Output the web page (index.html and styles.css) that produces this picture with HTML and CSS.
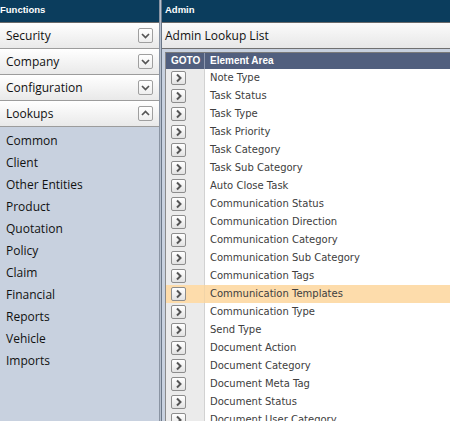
FILE: index.html
```html
<!DOCTYPE html>
<html>
<head>
<meta charset="utf-8">
<link rel="stylesheet" href="styles.css">
</head>
<body>
<div class="app">
  <aside class="side">
    <div class="bar">Functions</div>
    <div class="acc-h"><span>Security</span><span class="tog"><svg width="13" height="13" viewBox="0 0 13 13"><polyline points="3,5 6.5,8.5 10,5" fill="none" stroke="#555" stroke-width="1.7"/></svg></span></div>
    <div class="acc-h"><span>Company</span><span class="tog"><svg width="13" height="13" viewBox="0 0 13 13"><polyline points="3,5 6.5,8.5 10,5" fill="none" stroke="#555" stroke-width="1.7"/></svg></span></div>
    <div class="acc-h"><span>Configuration</span><span class="tog"><svg width="13" height="13" viewBox="0 0 13 13"><polyline points="3,5 6.5,8.5 10,5" fill="none" stroke="#555" stroke-width="1.7"/></svg></span></div>
    <div class="acc-h"><span>Lookups</span><span class="tog"><svg width="13" height="13" viewBox="0 0 13 13"><polyline points="3,8 6.5,4.5 10,8" fill="none" stroke="#555" stroke-width="1.7"/></svg></span></div>
    <ul class="sub">
      <li>Common</li>
      <li>Client</li>
      <li>Other Entities</li>
      <li>Product</li>
      <li>Quotation</li>
      <li>Policy</li>
      <li>Claim</li>
      <li>Financial</li>
      <li>Reports</li>
      <li>Vehicle</li>
      <li>Imports</li>
    </ul>
  </aside>
  <div class="split"></div>
  <main class="main">
    <div class="bar">Admin</div>
    <div class="title">Admin Lookup List</div>
    <div class="content">
      <div class="grid">
        <div class="row head"><div class="c-goto">GOTO</div><div class="c-name">Element Area</div></div>
        <div class="row"><div class="c-goto"><span class="go"><svg width="13" height="12" viewBox="0 0 13 12"><polyline points="5,2.5 8.5,6 5,9.5" fill="none" stroke="#555" stroke-width="2"/></svg></span></div><div class="c-name">Note Type</div></div>
        <div class="row"><div class="c-goto"><span class="go"><svg width="13" height="12" viewBox="0 0 13 12"><polyline points="5,2.5 8.5,6 5,9.5" fill="none" stroke="#555" stroke-width="2"/></svg></span></div><div class="c-name">Task Status</div></div>
        <div class="row"><div class="c-goto"><span class="go"><svg width="13" height="12" viewBox="0 0 13 12"><polyline points="5,2.5 8.5,6 5,9.5" fill="none" stroke="#555" stroke-width="2"/></svg></span></div><div class="c-name">Task Type</div></div>
        <div class="row"><div class="c-goto"><span class="go"><svg width="13" height="12" viewBox="0 0 13 12"><polyline points="5,2.5 8.5,6 5,9.5" fill="none" stroke="#555" stroke-width="2"/></svg></span></div><div class="c-name">Task Priority</div></div>
        <div class="row"><div class="c-goto"><span class="go"><svg width="13" height="12" viewBox="0 0 13 12"><polyline points="5,2.5 8.5,6 5,9.5" fill="none" stroke="#555" stroke-width="2"/></svg></span></div><div class="c-name">Task Category</div></div>
        <div class="row"><div class="c-goto"><span class="go"><svg width="13" height="12" viewBox="0 0 13 12"><polyline points="5,2.5 8.5,6 5,9.5" fill="none" stroke="#555" stroke-width="2"/></svg></span></div><div class="c-name">Task Sub Category</div></div>
        <div class="row"><div class="c-goto"><span class="go"><svg width="13" height="12" viewBox="0 0 13 12"><polyline points="5,2.5 8.5,6 5,9.5" fill="none" stroke="#555" stroke-width="2"/></svg></span></div><div class="c-name">Auto Close Task</div></div>
        <div class="row"><div class="c-goto"><span class="go"><svg width="13" height="12" viewBox="0 0 13 12"><polyline points="5,2.5 8.5,6 5,9.5" fill="none" stroke="#555" stroke-width="2"/></svg></span></div><div class="c-name">Communication Status</div></div>
        <div class="row"><div class="c-goto"><span class="go"><svg width="13" height="12" viewBox="0 0 13 12"><polyline points="5,2.5 8.5,6 5,9.5" fill="none" stroke="#555" stroke-width="2"/></svg></span></div><div class="c-name">Communication Direction</div></div>
        <div class="row"><div class="c-goto"><span class="go"><svg width="13" height="12" viewBox="0 0 13 12"><polyline points="5,2.5 8.5,6 5,9.5" fill="none" stroke="#555" stroke-width="2"/></svg></span></div><div class="c-name">Communication Category</div></div>
        <div class="row"><div class="c-goto"><span class="go"><svg width="13" height="12" viewBox="0 0 13 12"><polyline points="5,2.5 8.5,6 5,9.5" fill="none" stroke="#555" stroke-width="2"/></svg></span></div><div class="c-name">Communication Sub Category</div></div>
        <div class="row"><div class="c-goto"><span class="go"><svg width="13" height="12" viewBox="0 0 13 12"><polyline points="5,2.5 8.5,6 5,9.5" fill="none" stroke="#555" stroke-width="2"/></svg></span></div><div class="c-name">Communication Tags</div></div>
        <div class="row sel"><div class="c-goto"><span class="go"><svg width="13" height="12" viewBox="0 0 13 12"><polyline points="5,2.5 8.5,6 5,9.5" fill="none" stroke="#555" stroke-width="2"/></svg></span></div><div class="c-name">Communication Templates</div></div>
        <div class="row"><div class="c-goto"><span class="go"><svg width="13" height="12" viewBox="0 0 13 12"><polyline points="5,2.5 8.5,6 5,9.5" fill="none" stroke="#555" stroke-width="2"/></svg></span></div><div class="c-name">Communication Type</div></div>
        <div class="row"><div class="c-goto"><span class="go"><svg width="13" height="12" viewBox="0 0 13 12"><polyline points="5,2.5 8.5,6 5,9.5" fill="none" stroke="#555" stroke-width="2"/></svg></span></div><div class="c-name">Send Type</div></div>
        <div class="row"><div class="c-goto"><span class="go"><svg width="13" height="12" viewBox="0 0 13 12"><polyline points="5,2.5 8.5,6 5,9.5" fill="none" stroke="#555" stroke-width="2"/></svg></span></div><div class="c-name">Document Action</div></div>
        <div class="row"><div class="c-goto"><span class="go"><svg width="13" height="12" viewBox="0 0 13 12"><polyline points="5,2.5 8.5,6 5,9.5" fill="none" stroke="#555" stroke-width="2"/></svg></span></div><div class="c-name">Document Category</div></div>
        <div class="row"><div class="c-goto"><span class="go"><svg width="13" height="12" viewBox="0 0 13 12"><polyline points="5,2.5 8.5,6 5,9.5" fill="none" stroke="#555" stroke-width="2"/></svg></span></div><div class="c-name">Document Meta Tag</div></div>
        <div class="row"><div class="c-goto"><span class="go"><svg width="13" height="12" viewBox="0 0 13 12"><polyline points="5,2.5 8.5,6 5,9.5" fill="none" stroke="#555" stroke-width="2"/></svg></span></div><div class="c-name">Document Status</div></div>
        <div class="row"><div class="c-goto"><span class="go"><svg width="13" height="12" viewBox="0 0 13 12"><polyline points="5,2.5 8.5,6 5,9.5" fill="none" stroke="#555" stroke-width="2"/></svg></span></div><div class="c-name">Document User Category</div></div>
      </div>
    </div>
  </main>
</div>
</body>
</html>
```

FILE: styles.css
```css
* { box-sizing: border-box; }
html, body { margin: 0; padding: 0; }
body {
  width: 450px;
  height: 421px;
  overflow: hidden;
  font-family: "Open Sans", "Noto Sans", sans-serif;
  background: #c8d1df;
}
.app {
  display: flex;
  height: 421px;
}
.side {
  width: 160px;
  flex: none;
  display: flex;
  flex-direction: column;
  border-right: 1px solid #8a94a3;
  background: #c8d1df;
}
.split {
  width: 1px;
  flex: none;
  background: #b7c0cd;
}
.main {
  flex: 1;
  min-width: 0;
  display: flex;
  flex-direction: column;
  border-left: 1px solid #6b7787;
  background: #c8d1df;
  overflow: hidden;
}
.bar {
  height: 23px;
  flex: none;
  background: #0b3d5d;
  border-bottom: 1px solid #6a6a6a;
  color: #fff;
  font-family: "Liberation Sans", Arial, sans-serif;
  font-weight: bold;
  font-size: 9.5px;
  line-height: 20px;
  padding-left: 0;
}
.main .bar { padding-left: 3px; }
.acc-h {
  height: 26px;
  flex: none;
  display: flex;
  align-items: center;
  justify-content: space-between;
  padding: 0 6px 0 6px;
  background: linear-gradient(#ffffff, #e9e9e9);
  border-bottom: 1px solid #9c9c9c;
  font-size: 12px;
  color: #111;
}
.tog {
  width: 15px;
  height: 15px;
  border: 1px solid #9f9f9f;
  border-radius: 2px;
  background: linear-gradient(#ffffff, #eeeeee);
  display: flex;
  align-items: center;
  justify-content: center;
}
.tog svg { display: block; }
.sub {
  list-style: none;
  margin: 0;
  padding: 3px 0 0 6px;
  flex: 1;
}
.sub li {
  height: 22px;
  line-height: 22px;
  font-size: 12px;
  color: #111;
}
.title {
  height: 26px;
  flex: none;
  background: linear-gradient(#fbfbfb, #e7e7e7);
  border-bottom: 1px solid #707070;
  font-size: 12px;
  line-height: 25px;
  padding-left: 3px;
  color: #111;
}
.content {
  flex: 1;
  padding: 3px 0 0 3px;
  overflow: hidden;
}
.grid {
  border-top: 1px solid #7a7a7a;
  border-left: 1px solid #8a8a8a;
  background: #fff;
  width: 320px;
}
.row {
  display: flex;
  height: 18px;
  font-family: "DejaVu Sans", Verdana, sans-serif;
  font-size: 10px;
  color: #404040;
}
.c-goto {
  width: 39px;
  flex: none;
  background: #ebebeb;
  border-right: 1px solid #d2d2d2;
  padding: 2px 0 0 5px;
}
.c-name {
  flex: 1;
  padding-left: 5px;
  line-height: 18px;
  white-space: nowrap;
}
.row.head {
  height: 16px;
  background: #515f7e;
  color: #fff;
  font-family: "Liberation Sans", Arial, sans-serif;
  font-weight: bold;
  font-size: 10px;
}
.row.head .c-goto {
  background: transparent;
  border-right: 1px solid #8e99b0;
  padding: 0 0 0 5px;
  line-height: 16px;
}
.row.head .c-name { line-height: 16px; }
.row.sel { background: #fddcab; }
.row.sel .c-goto { background: #fddcab; border-right-color: #f1d4a8; }
.go {
  width: 15px;
  height: 14px;
  border: 1px solid #8d8d8d;
  border-radius: 2px;
  background: linear-gradient(#ffffff, #e2e2e2);
  display: flex;
  align-items: center;
  justify-content: center;
}
.go svg { display: block; }
```
